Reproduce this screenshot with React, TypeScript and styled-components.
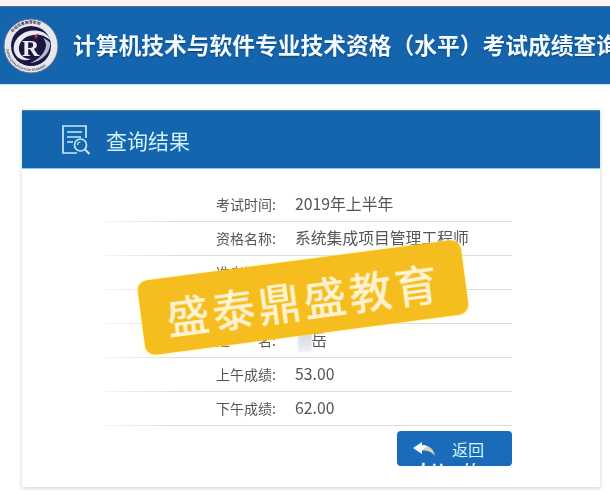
import styled, { createGlobalStyle } from "styled-components";

const rows = [
  { label: "考试时间:", value: "2019年上半年" },
  { label: "资格名称:", value: "系统集成项目管理工程师" },
  { label: "准考证号:", value: "2019" },
  { label: "证件号:", value: "" },
  { label: "姓　　名:", value: "岳", masked: true },
  { label: "上午成绩:", value: "53.00" },
  { label: "下午成绩:", value: "62.00" },
];

function SchoolLogo() {
  return (
    <LogoSvg viewBox="0 0 56 56" aria-hidden="true">
      <defs>
        <path id="logo-top" d="M5.5 28a22.5 22.5 0 0 1 45 0" />
        <path id="logo-bottom" d="M3 28a25 25 0 0 0 50 0" />
      </defs>
      <circle cx="28" cy="28" r="27" fill="#e6e8ee" />
      <circle cx="28" cy="28" r="27" fill="none" stroke="#6a6e86" strokeWidth="1" />
      <circle cx="28" cy="28" r="20" fill="#1b1840" />
      <text fontSize="3.8" fill="#2c2a4c" fontFamily="Noto Sans CJK SC, sans-serif" fontWeight="700">
        <textPath href="#logo-top" startOffset="20%">
          中培信息教育学院
        </textPath>
      </text>
      <text fontSize="3.2" fill="#474860" fontFamily="Liberation Sans, sans-serif" fontWeight="700">
        <textPath href="#logo-bottom" startOffset="4%">
          CHINA QUALIFICATION TRAINING
        </textPath>
      </text>
      <path
        d="M11 33C9 22 20 10 36 13C42 14 46 18 47 22C42 17 36 16 30 17C21 18 15 25 16 32C17 38 22 41 28 41C21 44 13 41 11 33Z"
        fill="#e8ebf4"
      />
      <path
        d="M47 25C48 34 39 44 27 45C35 42 42 35 43 28C43 25 42 22 40 20C43 21 46 23 47 25Z"
        fill="#b4b9d4"
      />
      <text x="19" y="38" fontSize="24" fontWeight="700" fill="#f2e9ee" fontFamily="Liberation Serif, serif">
        R
      </text>
      <path d="M31 18L36 15L33 21Z" fill="#c2354a" />
    </LogoSvg>
  );
}

function ResultIcon() {
  return (
    <svg width="30" height="32" viewBox="0 0 30 32" fill="none" stroke="#c4ecf8" strokeWidth="1.7" aria-hidden="true">
      <path d="M16 29H2V2H25V14" />
      <path d="M6 8H21M6 13H20M6 18H12" />
      <circle cx="19.5" cy="21" r="6" />
      <path d="M24 25.5L28.5 30" strokeWidth="2" />
      <path d="M16.5 21a3 3 0 0 1 3-3" strokeWidth="1.2" />
    </svg>
  );
}

function ReplyArrow() {
  return (
    <svg width="22" height="14" viewBox="0 0 22 14" aria-hidden="true">
      <path d="M9 3C17 3 21 8 22 14C19 10 15 8.5 9 8.5Z" fill="#d8d2b8" />
      <path d="M0 6L9 0V3C11 3 13 3.4 14.5 4.4C12 5.6 10.5 7 9 8.5V12Z" fill="#f6fcff" />
    </svg>
  );
}

export default function App() {
  return (
    <>
      <GlobalStyle />
      <Page>
        <TopBar>
          <SchoolLogo />
          <SiteTitle>计算机技术与软件专业技术资格（水平）考试成绩查询</SiteTitle>
        </TopBar>
        <Panel>
          <PanelHead>
            <ResultIcon />
            <PanelTitle>查询结果</PanelTitle>
          </PanelHead>
          <PanelBody>
            <Sticker>盛泰鼎盛教育</Sticker>
            <ResultList>
              {rows.map((row) => (
                <ResultRow key={row.label}>
                  <RowLabel>{row.label}</RowLabel>
                  <RowValue>
                    {row.masked && <MaskedName />}
                    {row.value}
                  </RowValue>
                </ResultRow>
              ))}
            </ResultList>
            <Actions>
              <BackButton>
                <ReplyArrow />
                <span>返回</span>
                <UrlMark>http://www</UrlMark>
              </BackButton>
            </Actions>
          </PanelBody>
        </Panel>
      </Page>
    </>
  );
}

const GlobalStyle = createGlobalStyle`
  html, body {
    margin: 0;
    height: 100%;
    overflow: hidden;
    background: #ffffff;
    font-family: "Noto Sans CJK SC", "Liberation Sans", sans-serif;
  }
`;

const Page = styled.div`
  width: 610px;
  height: 494px;
  overflow: hidden;
  padding-top: 6px;
  box-sizing: border-box;
  background: linear-gradient(to bottom, #fdf3f7 0, #fdf3f7 6px, #ffffff 6px);
`;

const TopBar = styled.header`
  height: 78px;
  display: flex;
  align-items: center;
  gap: 14px;
  padding: 0 0 0 3px;
  box-sizing: border-box;
  background: #1565ae;
  border-top: 1px solid #4a7395;
  box-shadow: 0 1px 1px #bde8fb;
  overflow: hidden;
`;

const LogoSvg = styled.svg`
  flex: none;
  width: 56px;
  height: 56px;
  filter: blur(0.5px);
`;

const SiteTitle = styled.h1`
  margin: 0 0 2px;
  flex: none;
  font-size: 22.75px;
  line-height: 30px;
  font-weight: 700;
  white-space: nowrap;
  color: #f2fbff;
  text-shadow: 0 1px 2px rgba(8, 40, 80, 0.55);
  filter: blur(0.3px);
`;

const Panel = styled.section`
  margin: 26px 10px 0 22px;
  height: 377px;
  background: #ffffff;
  box-shadow: 0 1px 4px rgba(120, 130, 140, 0.4);
`;

const PanelHead = styled.div`
  height: 59px;
  display: flex;
  align-items: center;
  gap: 15px;
  padding-left: 39px;
  box-sizing: border-box;
  background: #1565ae;
  border-top: 1px solid #4a7fa8;
  border-bottom: 1px solid #7fcdf0;
`;

const PanelTitle = styled.h2`
  margin: 0;
  font-size: 21px;
  line-height: 30px;
  font-weight: 400;
  color: #d3f1fb;
  filter: blur(0.3px);
`;

const PanelBody = styled.div`
  position: relative;
  padding: 19px 88px 0 83px;
`;

const ResultList = styled.div`
  display: flex;
  flex-direction: column;
`;

const ResultRow = styled.div`
  height: 34px;
  display: flex;
  align-items: center;
  padding-bottom: 2px;
  box-sizing: border-box;
  border-bottom: 1px solid;
  border-image: linear-gradient(to right, #f6f6f6, #dddddd 18%) 1;
`;

const RowLabel = styled.span`
  width: 79px;
  margin-left: 111px;
  font-size: 14px;
  color: #555555;
  white-space: nowrap;
  filter: blur(0.3px);
`;

const RowValue = styled.span`
  display: flex;
  align-items: center;
  font-size: 15.8px;
  color: #555555;
  white-space: nowrap;
  filter: blur(0.3px);
`;

const MaskedName = styled.i`
  width: 14px;
  height: 24px;
  margin: 0 -1px 0 3px;
  background: linear-gradient(to bottom, #cfcfd4, #eef0f6);
  filter: blur(1px);
`;

const Actions = styled.div`
  display: flex;
  justify-content: flex-end;
  margin-top: 5px;
`;

const BackButton = styled.button`
  position: relative;
  width: 115px;
  height: 35px;
  display: flex;
  align-items: center;
  gap: 17px;
  padding: 0 0 0 16px;
  box-sizing: border-box;
  overflow: hidden;
  border: 0;
  border-radius: 4px;
  background: #1a6cba;
  color: #d9f3fd;
  font-family: inherit;
  font-size: 16px;
`;

const UrlMark = styled.span`
  position: absolute;
  left: 24px;
  top: 29px;
  font-size: 15px;
  font-weight: 700;
  line-height: 18px;
  letter-spacing: 1px;
  color: #ffffff;
`;

const Sticker = styled.div`
  position: absolute;
  z-index: 2;
  left: 118px;
  top: 91px;
  width: 326px;
  height: 75px;
  display: flex;
  align-items: center;
  justify-content: center;
  border-radius: 10px;
  background: #f5bd1e;
  box-shadow: 0 0 3px #fff28a;
  color: #fff3d2;
  font-size: 43px;
  font-weight: 500;
  letter-spacing: 3px;
  transform: rotate(-7.5deg);
  filter: blur(0.5px);
`;
